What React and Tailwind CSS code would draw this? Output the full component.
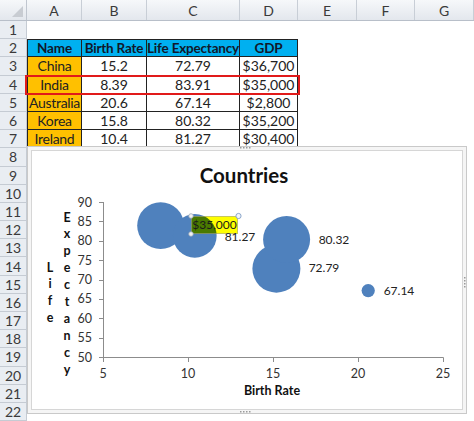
import React from 'react';

const cols = [
  { key: 'A', w: 55 },
  { key: 'B', w: 65 },
  { key: 'C', w: 93 },
  { key: 'D', w: 58 },
  { key: 'E', w: 59 },
  { key: 'F', w: 58 },
  { key: 'G', w: 59 },
];

const data = [
  ['China', '15.2', '72.79', '$36,700'],
  ['India', '8.39', '83.91', '$35,000'],
  ['Australia', '20.6', '67.14', '$2,800'],
  ['Korea', '15.8', '80.32', '$35,200'],
  ['Ireland', '10.4', '81.27', '$30,400'],
];

const font = { fontFamily: 'Lato, "Open Sans", sans-serif' };

// chart scales (page coordinates)
const px = (v) => 103 + (v - 5) * 17;
const py = (v) => 357 - (v - 50) * 3.875;
const pr = (g) => 24 * Math.sqrt(g / 36700);

const bubbles = [
  { x: 15.2, y: 72.79, g: 36700, label: '72.79', lx: 324, ly: 268 },
  { x: 8.39, y: 83.91, g: 35000 },
  { x: 20.6, y: 67.14, g: 2800, label: '67.14', lx: 399, ly: 291 },
  { x: 15.8, y: 80.32, g: 35200, label: '80.32', lx: 334, ly: 240 },
  { x: 10.4, y: 81.27, g: 30400, label: '81.27', lx: 240, ly: 237 },
];

function Cell({ col, row }) {
  const w = { width: col.w };
  const ci = cols.indexOf(col);
  if (row >= 2 && row <= 7 && ci < 4) {
    const isHead = row === 2;
    const text = isHead
      ? ['Name', 'Birth Rate', 'Life Expectancy', 'GDP'][ci]
      : data[row - 3][ci];
    const bg = isHead
      ? 'bg-[#00b0f0] font-bold text-[#10182a] text-[13.5px] tracking-[-0.2px]'
      : ci === 0
        ? 'bg-[#ffc000] text-[#222] text-[14px] tracking-[-0.3px]'
        : 'bg-white text-[#222] text-[14px]';
    return (
      <div
        style={w}
        className={`h-full shrink-0 flex items-center justify-center border-r border-b border-[#222] whitespace-nowrap ${bg} ${ci === 0 ? 'border-l' : ''} ${isHead ? 'border-t' : ''}`}
      >
        {text}
      </div>
    );
  }
  return <div style={w} className="h-full shrink-0" />;
}

function Chart() {
  return (
    <div className="absolute left-[27px] top-[146px] w-[440px] h-[268px] border border-[#c9c9c9] bg-[#f5f5f5] p-[3px]">
      <div className="w-full h-full border border-[#d6d6d6] bg-white" />
      <svg className="absolute left-[-1px] top-[-1px]" width="440" height="268" style={font}>
        <g transform="translate(-27,-146)">
          {/* frame handles */}
          {[240, 243, 246, 249].map((x) => (
            <rect key={'t' + x} x={x} y="147" width="1.5" height="1.5" fill="#9a9a9a" />
          ))}
          {[240, 243, 246, 249].map((x) => (
            <rect key={'b' + x} x={x} y="411" width="1.5" height="1.5" fill="#9a9a9a" />
          ))}
          {[277, 280, 283, 286].map((y) => (
            <rect key={'r' + y} x="464" y={y} width="1.5" height="1.5" fill="#9a9a9a" />
          ))}

          <text x="244" y="183" textAnchor="middle" fontSize="20.5" fontWeight="700" fill="#111">
            Countries
          </text>

          {/* y axis */}
          <line x1="103.5" y1="202" x2="103.5" y2="357" stroke="#8c8c8c" />
          {[50, 55, 60, 65, 70, 75, 80, 85, 90].map((v) => (
            <g key={v}>
              <line x1="99" y1={Math.round(py(v)) + 0.5} x2="103.5" y2={Math.round(py(v)) + 0.5} stroke="#8c8c8c" />
              <text x="92" y={py(v) + 4.5} textAnchor="end" fontSize="12.5" fill="#333">
                {v}
              </text>
            </g>
          ))}

          {/* x axis */}
          <line x1="103" y1="357.5" x2="443.5" y2="357.5" stroke="#8c8c8c" />
          {[5, 10, 15, 20, 25].map((v) => (
            <g key={v}>
              <line x1={px(v) + 0.5} y1="357.5" x2={px(v) + 0.5} y2="362" stroke="#8c8c8c" />
              <text x={px(v)} y="377.5" textAnchor="middle" fontSize="12.5" fill="#333">
                {v}
              </text>
            </g>
          ))}
          <text x="272" y="394.5" textAnchor="middle" fontSize="12.5" fontWeight="700" fill="#111">
            Birth Rate
          </text>

          {/* y axis title, stacked */}
          {'Life'.split('').map((c, i) => (
            <text key={'l' + i} x="50" y={271.5 + i * 16.8} textAnchor="middle" fontSize="12.5" fontWeight="700" fill="#111">
              {c}
            </text>
          ))}
          {'Expectancy'.split('').map((c, i) => (
            <text key={'e' + i} x="67" y={221.5 + i * 16.9} textAnchor="middle" fontSize="12.5" fontWeight="700" fill="#111">
              {c}
            </text>
          ))}

          {/* bubbles */}
          {bubbles.map((b, i) => (
            <circle key={i} cx={px(b.x)} cy={py(b.y)} r={pr(b.g)} fill="#4f81bd" />
          ))}

          {/* selected data label */}
          <defs>
            <clipPath id="lbl">
              <rect x="191" y="216" width="47" height="18" />
            </clipPath>
          </defs>
          <rect x="191" y="216" width="47" height="18" fill="#ffff00" />
          <circle cx={px(10.4)} cy={py(81.27)} r={pr(30400)} fill="#4a7a00" clipPath="url(#lbl)" />
          <rect x="191.5" y="216.5" width="46" height="17" fill="none" stroke="#a0a0a0" strokeWidth="0.6" />
          <text x="214.5" y="229" textAnchor="middle" fontSize="12" fill="#1a1a1a">
            $35,000
          </text>

          {bubbles.filter((b) => b.label).map((b, i) => (
            <text key={i} x={b.lx} y={b.ly + 4} textAnchor="middle" fontSize="12" fill="#222">
              {b.label}
            </text>
          ))}

          {/* label handles */}
          <circle cx="191" cy="216" r="2.3" fill="#f2f2f2" stroke="#9aa8b8" strokeWidth="0.8" />
          <circle cx="238.5" cy="216" r="2.6" fill="#f2f6fb" stroke="#7f9cc4" strokeWidth="0.9" />
          <circle cx="191" cy="234" r="2.3" fill="#f2f2f2" stroke="#9aa8b8" strokeWidth="0.8" />
        </g>
      </svg>
    </div>
  );
}

function RowFourBox() {
  return <div className="absolute left-[25px] top-[75px] w-[275px] h-[20px] border-2 border-[#e11a1a]" />;
}

export default function App() {
  const rows = Array.from({ length: 22 }, (_, i) => i + 1);
  return (
    <div className="relative w-[474px] h-[421px] overflow-hidden bg-white" style={font}>
      {/* column headers */}
      <div className="flex h-[21px] border-b border-[#b8bfc9] bg-gradient-to-b from-[#f6f8fa] to-[#e3e7ed]">
        <div className="w-[27px] shrink-0 h-full border-r border-[#c0c6cf] relative">
          <div className="absolute right-[3px] bottom-[3px] w-0 h-0 border-l-[11px] border-l-transparent border-b-[11px] border-b-[#c8ccd2]" />
        </div>
        {cols.map((c) => (
          <div
            key={c.key}
            style={{ width: c.w }}
            className="shrink-0 h-full flex items-center justify-center border-r border-[#c8ced6] text-[14px] text-[#3a3a3a]"
          >
            {c.key}
          </div>
        ))}
      </div>

      {rows.map((r) => (
        <div key={r} className="flex h-[18.2px]">
          <div className="w-[27px] shrink-0 h-full flex items-center justify-center bg-[#e9edf2] border-r border-b border-[#c5cbd3] text-[14px] text-[#3a3a3a]">
            {r}
          </div>
          {cols.map((c) => (
            <Cell key={c.key} col={c} row={r} />
          ))}
        </div>
      ))}

      <RowFourBox />
      <Chart />
    </div>
  );
}
